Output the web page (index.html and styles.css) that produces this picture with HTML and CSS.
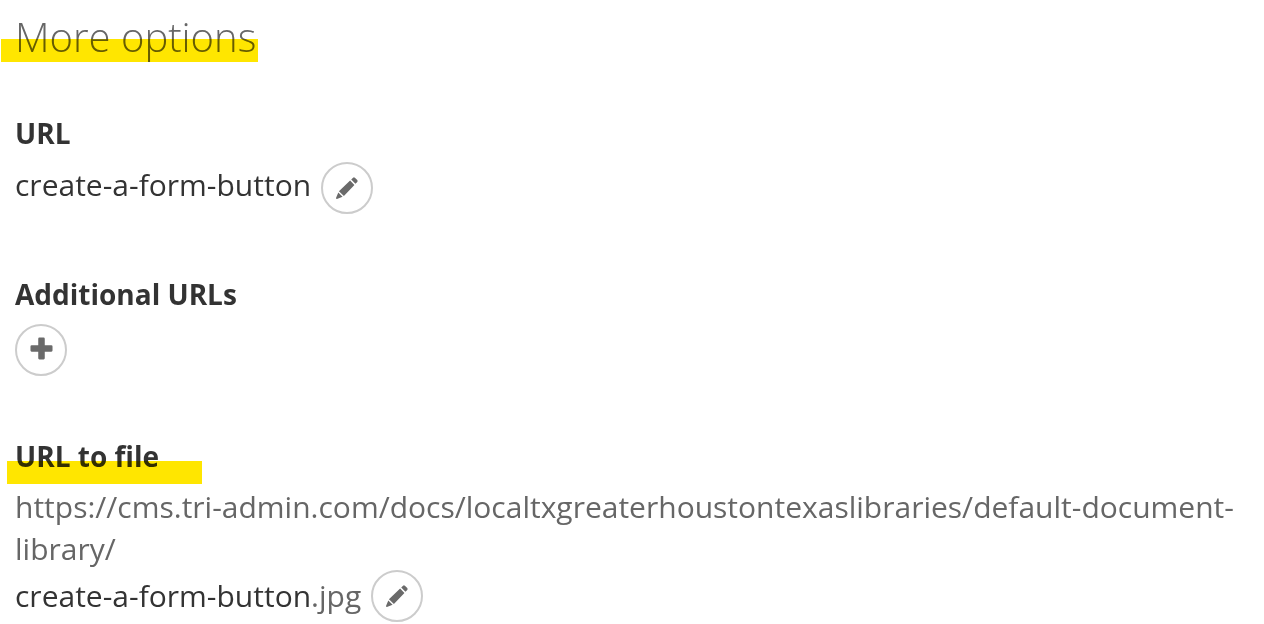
FILE: index.html
```html
<!DOCTYPE html>
<html lang="en">
<head>
<meta charset="utf-8">
<title>More options</title>
<link rel="stylesheet" href="styles.css">
</head>
<body>
<div class="page">
  <h2 class="title">More options<span class="mark mark-title"></span></h2>
  <section class="field field-url">
    <h3 class="label">URL</h3>
    <div class="value"><span class="dark lift">create-a-form-button</span>
      <button class="round" aria-label="Edit"><svg class="ico pencil" viewBox="0 0 24 24"><path fill-rule="evenodd" d="M18.6 .8 Q19.6 0 20.6 .8 L23.2 3.4 Q24 4.4 23.2 5.4 L21.2 7.4 L16.6 2.8 Z M15.4 3.9 L20.1 8.6 L8.6 20.8 L3.2 15.6 Z M2.5 16.9 L7.2 21.5 L1 24 Q0 24 0 23 Z"/></svg></button>
    </div>
  </section>
  <section class="field field-add">
    <h3 class="label">Additional URLs</h3>
    <button class="round" aria-label="Add"><svg class="ico plus" viewBox="0 0 24 24"><path d="M9.8 .5 H14.2 Q15.4 .5 15.4 1.7 V8.6 H22.3 Q23.5 8.6 23.5 9.8 V14.2 Q23.5 15.4 22.3 15.4 H15.4 V22.3 Q15.4 23.5 14.2 23.5 H9.8 Q8.6 23.5 8.6 22.3 V15.4 H1.7 Q.5 15.4 .5 14.2 V9.8 Q.5 8.6 1.7 8.6 H8.6 V1.7 Q8.6 .5 9.8 .5 Z"/></svg></button>
  </section>
  <section class="field field-file">
    <h3 class="label">URL to file<span class="mark mark-file"></span></h3>
    <div class="path">https://cms.tri-admin.com/docs/localtxgreaterhoustontexaslibraries/default-document-library/</div>
    <div class="value"><span><span class="dark">create-a-form-button</span>.jpg</span>
      <button class="round" aria-label="Edit"><svg class="ico pencil" viewBox="0 0 24 24"><path fill-rule="evenodd" d="M18.6 .8 Q19.6 0 20.6 .8 L23.2 3.4 Q24 4.4 23.2 5.4 L21.2 7.4 L16.6 2.8 Z M15.4 3.9 L20.1 8.6 L8.6 20.8 L3.2 15.6 Z M2.5 16.9 L7.2 21.5 L1 24 Q0 24 0 23 Z"/></svg></button>
    </div>
  </section>
</div>
</body>
</html>
```
FILE: styles.css
```css
* { box-sizing: border-box; }
html, body { margin: 0; height: 100%; overflow: hidden; background: #fff; }
body { font-family: "Open Sans", sans-serif; color: #666; }
.page { padding: 10px 15px 0; }
.title { position: relative; margin: 0; font-size: 40px; line-height: 54px; font-weight: 300; color: #666; }
.mark { position: absolute; background: #ffe600; mix-blend-mode: multiply; height: 23px; }
.mark-title { left: -14px; top: 29px; width: 257px; }
.mark-file { left: -8px; top: 23px; width: 195px; }
.field-url { margin-top: 51px; }
.field-add { margin-top: 62px; }
.field-file { margin-top: 62px; }
.label { position: relative; margin: 0 0 12px; font-size: 28px; line-height: 36px; font-weight: 700; color: #333; }
.field-url .label { margin-bottom: 11px; }
.value { display: flex; align-items: center; gap: 10px; font-size: 30px; line-height: 52px; }
.dark { color: #333; }
.lift { line-height: 40px; margin-bottom: 6px; }
.path { font-size: 30px; line-height: 42px; }
.round { display: flex; align-items: center; justify-content: center; width: 52px; height: 52px; padding: 0; border: 2px solid #ccc; border-radius: 50%; background: #fff; }
.ico { fill: #6a6a6a; }
.pencil { width: 22px; height: 22px; }
.plus { width: 23px; height: 23px; margin-bottom: 3px; }
```
